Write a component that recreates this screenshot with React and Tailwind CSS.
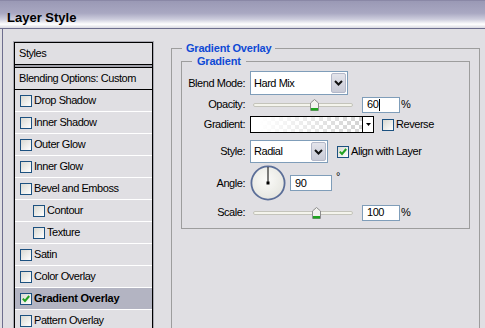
import React from "react";

const styleItems = [
  { label: "Drop Shadow" },
  { label: "Inner Shadow" },
  { label: "Outer Glow" },
  { label: "Inner Glow" },
  { label: "Bevel and Emboss" },
  { label: "Contour", sub: true },
  { label: "Texture", sub: true },
  { label: "Satin" },
  { label: "Color Overlay" },
  { label: "Gradient Overlay", checked: true, active: true },
  { label: "Pattern Overlay" },
];

function CheckBox({ checked }) {
  return (
    <span className="flex h-[12px] w-[12px] shrink-0 items-center justify-center border border-[#1c5180] bg-[linear-gradient(135deg,#d9d9d2,#ffffff)]">
      {checked && (
        <svg width="8" height="8" viewBox="0 0 8 8">
          <path d="M0.8 3.6 L3 6 L7.2 1" fill="none" stroke="#21a121" strokeWidth="2" />
        </svg>
      )}
    </span>
  );
}

function Select({ value, className }) {
  return (
    <div className={`flex items-stretch border border-[#7f9db9] bg-white p-[1px] ${className}`}>
      <span className="flex flex-1 items-center pl-[2px]">{value}</span>
      <span className="flex w-[15px] items-center justify-center rounded-[2px] border border-[#b3b8c9] bg-[linear-gradient(#e3e4eb,#c8cad6)]">
        <svg width="9" height="6" viewBox="0 0 9 6">
          <path d="M1 1 L4.5 4.5 L8 1" fill="none" stroke="#111" strokeWidth="2" />
        </svg>
      </span>
    </div>
  );
}

function Thumb({ className }) {
  return (
    <svg className={`absolute top-[3px] ${className}`} width="9" height="12" viewBox="0 0 9 12">
      <path d="M0.5 4 L4.5 0.5 L8.5 4 V11.5 H0.5 Z" fill="#f2f2ee" stroke="#8d8d8d" />
      <rect x="1" y="9" width="7" height="2.5" fill="#1fa41f" />
    </svg>
  );
}

function Slider({ thumbClass }) {
  return (
    <div className="relative flex h-full w-[107px] items-center pl-[3px] pt-[1px]">
      <div className="h-[4px] w-[100px] rounded-full border border-[#c4c4bb] bg-[#f4f4ec]" />
      <Thumb className={thumbClass} />
    </div>
  );
}

function NumberBox({ value, width, caret }) {
  return (
    <div className={`flex h-[16px] ${width} items-center border border-[#7f9db9] bg-white pl-[4px]`}>
      {value}
      {caret && <span className="ml-[1px] h-[12px] w-[1px] bg-black" />}
    </div>
  );
}

function Row({ label, className, children }) {
  return (
    <div className={`flex items-center ${className}`}>
      <span className="w-[63px] text-right">{label}</span>
      <div className="ml-[5px] flex h-full items-center">{children}</div>
    </div>
  );
}

export default function App() {
  return (
    <div className="h-[328px] w-[485px] overflow-hidden bg-[#e0dfe3] font-['Liberation_Sans',Arial,sans-serif] text-[11px] leading-[13px] tracking-[-0.45px] text-black">
      {/* Title bar */}
      <div className="h-[29px] border-t border-b border-t-[#8a88a6] border-b-[#6e6e8e] bg-[linear-gradient(to_bottom,#9a99b5_0%,#a9a8c2_45%,#cdcddd_68%,#ffffff_86%,#d9d9e2_100%)] pl-[7px] pt-[9px]">
        <span className="text-[13px] font-bold leading-[15px] tracking-normal">Layer Style</span>
      </div>

      {/* Body */}
      <div className="ml-[2px] flex h-[300px] border-l border-[#6e6e8e] pl-[11px] pt-[13px]">
        {/* Styles list */}
        <div className="h-[300px] w-[139px] shrink-0 overflow-hidden border border-black shadow-[0_0_0_1px_#a9a9b2]">
          <div className="flex h-[22px] items-center border-b border-black pl-[4px]">Styles</div>
          <div className="h-[2px] bg-[#a1a1aa]" />
          <div className="flex h-[23px] items-center border-y border-black pl-[4px]">Blending Options: Custom</div>
          {styleItems.map((item) => (
            <div
              key={item.label}
              className={`flex h-[22px] items-center gap-[2px] border-b border-white ${item.sub ? "pl-[18px]" : "pl-[5px]"} ${item.active ? "bg-[#b3b4c2] font-bold tracking-[-0.2px]" : ""}`}
            >
              <CheckBox checked={item.checked} />
              <span>{item.label}</span>
            </div>
          ))}
        </div>

        {/* Gradient Overlay group */}
        <fieldset className="ml-[18px] h-[300px] w-[309px] shrink-0 border border-[#9d9d9d]">
          <legend className="ml-[10px] px-[4px] font-bold tracking-[-0.2px] text-[#0f4ad5]">Gradient Overlay</legend>
          <fieldset className="ml-[9px] w-[289px] border border-[#9d9d9d] pb-[7px] pt-[3px]">
            <legend className="ml-[10px] px-[5px] font-bold tracking-[-0.2px] text-[#0f4ad5]">Gradient</legend>

            <Row label="Blend Mode:" className="h-[24px]">
              <Select value="Hard Mix" className="h-[24px] w-[98px]" />
            </Row>

            <Row label="Opacity:" className="mt-[1px] h-[17px]">
              <Slider thumbClass="left-[60px]" />
              <div className="ml-[5px]">
                <NumberBox value="60" width="w-[38px]" caret />
              </div>
              <span className="ml-[1px]">%</span>
            </Row>

            <Row label="Gradient:" className="mt-[3px] h-[17px]">
              <div className="flex h-[17px] w-[124px] border border-black">
                <div className="flex-1 [background-image:linear-gradient(to_right,#ffffff_8%,rgba(255,255,255,0)_100%),repeating-conic-gradient(#d2d2d2_0_25%,#ffffff_0_50%)] [background-size:100%_100%,8px_8px]" />
                <div className="flex w-[11px] items-center justify-center border-l border-black bg-white">
                  <svg width="5" height="3" viewBox="0 0 5 3">
                    <path d="M0 0 H5 L2.5 3 Z" fill="#000" />
                  </svg>
                </div>
              </div>
              <div className="ml-[8px]">
                <CheckBox />
              </div>
              <span className="ml-[2px]">Reverse</span>
            </Row>

            <Row label="Style:" className="mt-[7px] h-[23px]">
              <Select value="Radial" className="h-[23px] w-[78px]" />
              <div className="ml-[9px]">
                <CheckBox checked />
              </div>
              <span className="ml-[2px]">Align with Layer</span>
            </Row>

            <Row label="Angle:" className="mt-[2px] h-[36px]">
              <svg width="36" height="36" viewBox="0 0 36 36">
                <defs>
                  <radialGradient id="dial" cx="45%" cy="40%" r="60%">
                    <stop offset="0%" stopColor="#fbfbf9" />
                    <stop offset="100%" stopColor="#e6e6e0" />
                  </radialGradient>
                </defs>
                <circle cx="18" cy="18" r="16.6" fill="url(#dial)" stroke="#5b6e98" strokeWidth="1.8" />
                <line x1="18" y1="18" x2="18" y2="2" stroke="#000" strokeWidth="1" />
                <rect x="16.5" y="16.5" width="3" height="3" fill="#000" />
              </svg>
              <div className="ml-[4px]">
                <NumberBox value="90" width="w-[42px]" />
              </div>
              <span className="ml-[4px] mb-[14px]">°</span>
            </Row>

            <Row label="Scale:" className="mt-[3px] h-[17px]">
              <Slider thumbClass="left-[62px]" />
              <div className="ml-[5px]">
                <NumberBox value="100" width="w-[38px]" />
              </div>
              <span className="ml-[1px]">%</span>
            </Row>
          </fieldset>
        </fieldset>
      </div>
    </div>
  );
}
